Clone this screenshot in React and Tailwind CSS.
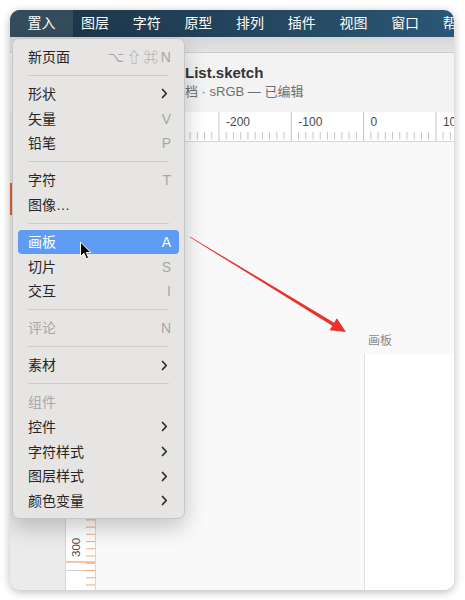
import React from "react";

const menuItems = [
  { label: "新页面", shortcut: "⌥⇧⌘N" },
  "sep",
  { label: "形状", sub: true },
  { label: "矢量", shortcut: "V" },
  { label: "铅笔", shortcut: "P" },
  "sep",
  { label: "字符", shortcut: "T" },
  { label: "图像…" },
  "sep",
  { label: "画板", shortcut: "A", active: true },
  { label: "切片", shortcut: "S" },
  { label: "交互", shortcut: "I" },
  "sep",
  { label: "评论", shortcut: "N", disabled: true },
  "sep",
  { label: "素材", sub: true },
  "sep",
  { label: "组件", disabled: true },
  { label: "控件", sub: true },
  { label: "字符样式", sub: true },
  { label: "图层样式", sub: true },
  { label: "颜色变量", sub: true },
];

const topMenu = ["图层", "字符", "原型", "排列", "插件", "视图", "窗口", "帮助"];

const STEP = 7.23;

function HRuler() {
  const ticks = [];
  for (let i = -20; i <= 40; i++) {
    const x = 123 + i * STEP;
    const major = i % 10 === 0;
    ticks.push(
      <line
        key={i}
        x1={x}
        x2={x}
        y1={major ? 0 : 20}
        y2={major ? 30 : 27.5}
        stroke="#c4c4c4"
        strokeWidth="1"
      />
    );
    if (major) {
      ticks.push(
        <text key={"t" + i} x={x + 7} y="14" fontSize="12" fill="#4a4a4a">
          {-200 + (i / 10) * 100}
        </text>
      );
    }
  }
  return (
    <svg width="100%" height="30" className="block">
      {ticks}
    </svg>
  );
}

function VRuler() {
  const ticks = [];
  for (let i = -60; i <= 3; i++) {
    const y = 428.5 + i * STEP;
    const major = i % 10 === 0;
    ticks.push(
      <line key={i} x1="20" x2="29" y1={y} y2={y} stroke="#f3a77c" strokeWidth="1" />
    );
    if (major) {
      ticks.push(<line key={"m" + i} x1="0" x2="20" y1={y} y2={y} stroke="#cfcfcf" />);
      ticks.push(
        <text
          key={"t" + i}
          x="13.5"
          y={y - 13.5}
          fontSize="11.5"
          fill="#4a4a4a"
          transform={`rotate(-90 13.5 ${y - 13.5})`}
        >
          {300 + (i / 10) * 100}
        </text>
      );
    }
  }
  return (
    <svg width="29" height="100%" className="block">
      {ticks}
      <line x1="0" x2="29" y1="420" y2="420" stroke="#f08a55" strokeWidth="1" />
    </svg>
  );
}

function Chevron({ color }) {
  return (
    <svg width="7" height="11" viewBox="0 0 7 11" className="mr-[3px]">
      <path d="M1.5 1.5 L5.3 5.5 L1.5 9.5" fill="none" stroke={color} strokeWidth="1.7" strokeLinecap="round" strokeLinejoin="round" />
    </svg>
  );
}

function InsertMenu() {
  return (
    <div className="absolute left-[2px] top-[28px] w-[173px] rounded-[7px] border border-[#c6c6c6] bg-[#e6e5e4] px-[5px] pt-[5.5px] pb-[4.5px] shadow-[0_8px_22px_rgba(0,0,0,0.22)] text-[14px]">
      {menuItems.map((it, i) => {
        if (it === "sep") {
          return (
            <div key={i} className="h-[12.3px] flex items-center mx-[10px]">
              <div className="h-px w-full bg-[#cdcdcd]" />
            </div>
          );
        }
        const textColor = it.active ? "text-white" : it.disabled ? "text-[#a9a9a9]" : "text-[#262626]";
        return (
          <div
            key={i}
            className={`h-[24.7px] flex items-center justify-between pl-[10px] pr-[8px] rounded-[4px] ${
              it.active ? "bg-[#5e9cf4]" : ""
            }`}
          >
            <span className={`${textColor} leading-none`}>{it.label}</span>
            {it.shortcut && (
              <span
                className={`${it.active ? "text-white" : "text-[#a6a6a6]"} leading-none ${
                  it.shortcut.length > 1 ? "tracking-[3px] mr-[-3px]" : ""
                }`}
              >
                {it.shortcut}
              </span>
            )}
            {it.sub && <Chevron color="#2a2a2a" />}
          </div>
        );
      })}
    </div>
  );
}

export default function App() {
  return (
    <div className="w-[465px] h-[600px] bg-white pl-[10px] pt-[10px] font-['Liberation_Sans','Noto_Sans_CJK_SC',sans-serif]">
      <div className="relative w-[444px] h-[580px] rounded-[10px] overflow-hidden bg-[#f3f3f3] shadow-[0_2px_10px_rgba(0,0,0,0.28)] flex flex-col">
        {/* menu bar */}
        <div className="h-[27px] shrink-0 flex items-center bg-gradient-to-r from-[#1b3245] to-[#2b5775] text-white text-[14px]">
          <div className="h-full w-[63px] shrink-0 flex items-center justify-center bg-[#354c5d]">置入</div>
          <div className="flex shrink-0 items-center gap-[23.7px] ml-[8px] whitespace-nowrap">
            {topMenu.map((m) => (
              <span key={m}>{m}</span>
            ))}
          </div>
        </div>

        {/* toolbar strip */}
        <div className="h-[16px] shrink-0 bg-gradient-to-b from-[#d6d6d6] to-[#e3e3e3] border-b border-[#cdcdcd]" />

        {/* title */}
        <div className="h-[59px] shrink-0 flex flex-col justify-center pl-[175px] pb-[2px]">
          <div className="text-[15px] font-bold text-[#333333] leading-[20px]">List.sketch</div>
          <div className="text-[13px] text-[#6e6e6e] leading-[17px]">档 · sRGB — 已编辑</div>
        </div>

        {/* workspace */}
        <div className="flex-1 flex min-h-0">
          <div className="w-[56px] shrink-0 bg-[#ebebeb] border-r border-[#d6d6d6] pt-[71px]">
            <div className="w-[3px] h-[32px] bg-[#dd6530]" />
          </div>
          <div className="flex-1 flex flex-col min-w-0">
            <div className="h-[30px] shrink-0 flex bg-white border-b border-[#d8d8d8]">
              <div className="w-[30px] shrink-0 border-r border-[#d8d8d8]" />
              <div className="flex-1 overflow-hidden">
                <HRuler />
              </div>
            </div>
            <div className="flex-1 flex min-h-0">
              <div className="w-[30px] shrink-0 bg-white border-r border-[#d8d8d8] overflow-hidden">
                <VRuler />
              </div>
              <div className="flex-1 bg-[#f9f9f9] flex flex-col pt-[190px]">
                <div className="pl-[272px] text-[12px] leading-[18px] text-[#8a8a8a] mb-[4px]">画板</div>
                <div className="ml-[268px] flex-1 bg-white border-l border-[#e0e0e0]" />
              </div>
            </div>
          </div>
        </div>

        <InsertMenu />
      </div>

      {/* red arrow */}
      <svg className="absolute left-0 top-0 pointer-events-none" width="465" height="600">
        <polygon
          points="190.2,236.7 334.1,322.75 336.84,318.22 346,332 329.56,330.18 332.3,325.65 189.8,237.3"
          fill="#e8322a"
        />
      </svg>

      {/* cursor */}
      <svg className="absolute left-[79px] top-[241px] pointer-events-none" width="14" height="20" viewBox="0 0 14 20">
        <path
          d="M1.5 1 L1.5 15.5 L5 12.3 L7.4 17.8 L9.6 16.8 L7.3 11.5 L11.8 11.5 Z"
          fill="#000"
          stroke="#fff"
          strokeWidth="1"
          strokeLinejoin="round"
        />
      </svg>
    </div>
  );
}
